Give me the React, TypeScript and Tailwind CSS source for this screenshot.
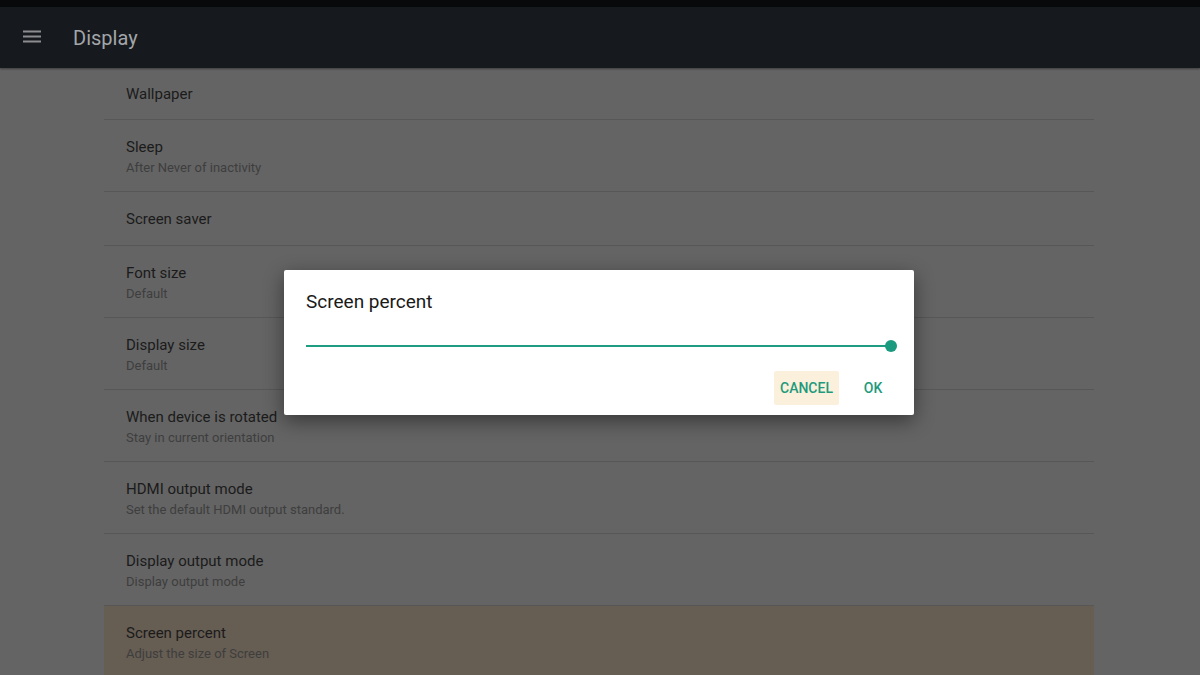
import React from "react";

const rows = [
  { title: "Wallpaper" },
  { title: "Sleep", sub: "After Never of inactivity" },
  { title: "Screen saver" },
  { title: "Font size", sub: "Default" },
  { title: "Display size", sub: "Default" },
  { title: "When device is rotated", sub: "Stay in current orientation" },
  { title: "HDMI output mode", sub: "Set the default HDMI output standard." },
  { title: "Display output mode", sub: "Display output mode" },
  { title: "Screen percent", sub: "Adjust the size of Screen", selected: true },
];

function Row({ title, sub, selected, first }: { title: string; sub?: string; selected?: boolean; first?: boolean }) {
  const h = sub ? "h-[72px]" : first ? "h-[52px]" : "h-[54px]";
  return (
    <div
      className={`${h} flex flex-col justify-center pt-[2px] px-[22px] border-b border-[#575757] ${
        selected ? "bg-[#665d53] border-b-0" : ""
      }`}
    >
      <div className="text-[15px] leading-[21px] text-[#1b1b1b]">{title}</div>
      {sub && <div className="text-[13px] leading-[19px] text-[#3e3e3e]">{sub}</div>}
    </div>
  );
}

export default function App() {
  return (
    <div className="relative w-[1200px] h-[675px] overflow-hidden bg-[#646464] font-['Roboto',sans-serif]">
      <div className="h-[7px] bg-[#07090b]" />
      <header className="h-[61px] bg-[#16191d] flex items-center shadow-[0_1px_2px_rgba(0,0,0,0.4)]">
        <svg className="ml-[23px] mt-[-1px]" width="18" height="14" viewBox="0 0 18 14">
          <rect x="0" y="0.5" width="18" height="2" fill="#8b8d90" />
          <rect x="0" y="5.5" width="18" height="2" fill="#8b8d90" />
          <rect x="0" y="10.5" width="18" height="2" fill="#8b8d90" />
        </svg>
        <span className="ml-[32px] mt-[1px] text-[20px] text-[#a3a6a9]">Display</span>
      </header>
      <div className="mx-[104px] w-[990px]">
        {rows.map((r, i) => (
          <Row key={r.title} {...r} first={i === 0} />
        ))}
      </div>

      <div className="absolute left-[284px] top-[270px] w-[630px] h-[145px] bg-white rounded-[2px] shadow-[0_6px_20px_rgba(0,0,0,0.45)] px-[22px] pt-[20px]">
        <div className="text-[19px] leading-[24px] text-[#1a1a1a]">Screen percent</div>
        <div className="relative mt-[26px] h-[12px] flex items-center">
          <div className="h-[2px] w-[585px] bg-[#1f9d82]" />
          <div className="absolute left-[579px] top-0 w-[12px] h-[12px] rounded-full bg-[#1a9a7f]" />
        </div>
        <div className="flex justify-end items-center gap-[14px] mt-[19px] mr-[-1px]">
          <div className="h-[34px] w-[65px] flex items-center justify-center bg-[#fbf0db] rounded-[2px] text-[14px] font-medium text-[#1f9a7c]">
            CANCEL
          </div>
          <div className="h-[34px] w-[40px] flex items-center justify-center text-[14px] font-medium text-[#1f9a7c]">
            OK
          </div>
        </div>
      </div>
    </div>
  );
}
